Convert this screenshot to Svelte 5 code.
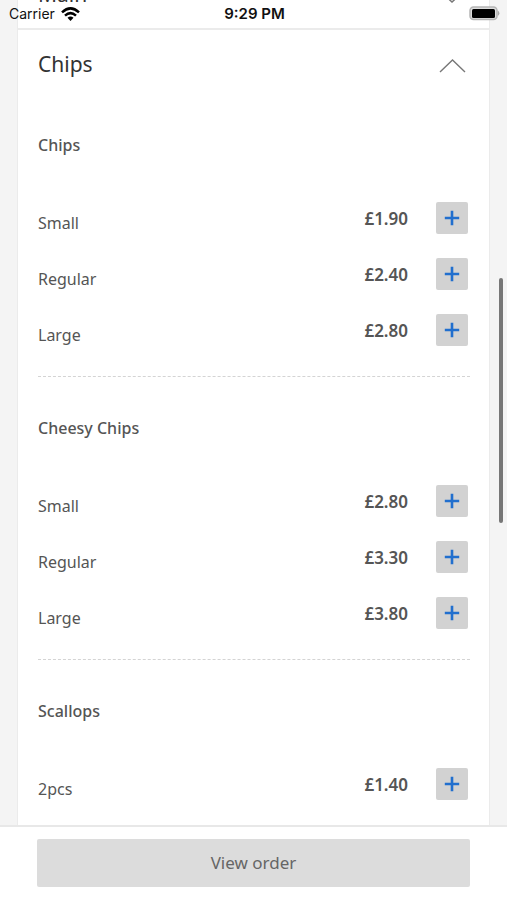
<script>
  const groups = [
    { name: 'Chips', items: [['Small', '£1.90'], ['Regular', '£2.40'], ['Large', '£2.80']] },
    { name: 'Cheesy Chips', items: [['Small', '£2.80'], ['Regular', '£3.30'], ['Large', '£3.80']] },
    { name: 'Scallops', items: [['2pcs', '£1.40']] }
  ];
  let open = $state(true);
</script>

<div class="screen">
  <header class="status">
    <span class="carrier">
      Carrier
      <svg width="19" height="14" viewBox="0 0 19 14" aria-hidden="true">
        <g fill="none" stroke="#000" stroke-width="2.5">
          <path d="M1 5.3Q9.500-2.500 18 5.300" />
          <path d="M4 8.600Q9.500 3.600 15 8.600" />
        </g>
        <path d="M6.500 10.800Q9.500 8.200 12.500 10.800L9.500 14Z" />
      </svg>
    </span>
    <span class="time">9:29 PM</span>
    <svg class="battery" width="31" height="16" viewBox="0 0 31 16" aria-hidden="true">
      <rect x="1" y="1" width="27" height="12.500" rx="3.500" fill="#ddd" stroke="#b5b5b5" stroke-width="1.500" />
      <rect x="3" y="3" width="23" height="9" rx="1.500" />
      <path d="M28.800 4.500Q32 7.200 28.800 10Z" fill="#aaa" />
    </svg>
  </header>

  <main>
    <div class="card">
      <div class="previous">
        <h2>Main</h2>
        <svg width="28" height="14" viewBox="0 0 28 14" aria-hidden="true">
          <path d="M1 1L14 13L27 1" fill="none" stroke="#777" stroke-width="1.500" />
        </svg>
      </div>
      <button class="category" aria-expanded={open} onclick={() => (open = !open)}>
        <span>Chips</span>
        <svg class:closed={!open} width="28" height="18" viewBox="0 0 28 18" aria-hidden="true">
          <path d="M2 17L14.500 5L27 17" fill="none" stroke="#777" stroke-width="1.400" />
        </svg>
      </button>
      {#if open}
        {#each groups as group}
          <section>
            <h3>{group.name}</h3>
            <ul>
              {#each group.items as [size, price]}
                <li>
                  <span class="size">{size}</span>
                  <span class="price">{price}</span>
                  <button class="add" aria-label="Add {size} {group.name}">
                    <svg width="16" height="16" viewBox="0 0 16 16" aria-hidden="true">
                      <path d="M8 .8V15.200M.8 8H15.200" stroke="#216fce" stroke-width="2.600" />
                    </svg>
                  </button>
                </li>
              {/each}
            </ul>
          </section>
        {/each}
      {/if}
    </div>
    <div class="scrollbar"></div>
  </main>

  <footer><button class="order">View order</button></footer>
</div>

<style>
  :global(body) { margin: 0; }
  .screen {
    position: relative;
    display: flex;
    flex-direction: column;
    height: 100vh;
    overflow: hidden;
    background: #f4f4f4;
    color: #555;
    font-family: "Noto Sans", "Open Sans", sans-serif;
  }
  button { font: inherit; color: inherit; border: 0; padding: 0; cursor: pointer; }
  h2, h3, ul { margin: 0; padding: 0; }
  .status {
    position: absolute;
    inset: 0 0 auto;
    z-index: 1;
    display: grid;
    grid-template-columns: 1fr auto 1fr;
    align-items: center;
    height: 28px;
    padding: 0 7px 0 9px;
    box-sizing: border-box;
    color: #111;
    font: 14px/20px Inter, sans-serif;
  }
  .carrier { display: flex; align-items: center; gap: 6px; }
  .time { font-size: 15px; font-weight: 600; }
  .battery { justify-self: end; }
  main { flex: 1; min-height: 0; overflow: hidden; position: relative; }
  .card {
    min-height: 100%;
    margin: 0 17px;
    background: #fff;
    border: solid #ebebeb;
    border-width: 0 1px;
  }
  .previous {
    display: flex;
    align-items: flex-end;
    justify-content: space-between;
    height: 28px;
    padding: 0 23px 0 20px;
    border-bottom: 2px solid #ebebeb;
  }
  .previous h2 { margin-bottom: 20px; color: #333; font-size: 21px; font-weight: 400; line-height: 28px; }
  .previous svg { margin-bottom: 25px; }
  .category {
    display: flex;
    align-items: center;
    justify-content: space-between;
    width: 100%;
    height: 64px;
    padding: 4px 23px 0 20px;
    background: none;
    color: #333;
    font-size: 21px;
    line-height: 28px;
  }
  .closed { transform: rotate(180deg); }
  section { margin: 0 19px 0 20px; padding: 39px 0 30px; border-bottom: 1px dashed #d4d4d4; }
  h3 { height: 69px; font-size: 16px; font-weight: 500; line-height: 24px; }
  ul { display: flex; flex-direction: column; gap: 24px; list-style: none; }
  li { display: flex; align-items: center; height: 32px; padding-right: 2px; font-size: 16px; line-height: 24px; }
  .size { flex: 1; padding-top: 10px; }
  .price { margin-right: 28px; padding-top: 2px; font-weight: 600; font-size: 17px; }
  .add { display: grid; place-items: center; width: 32px; height: 32px; border-radius: 2px; background: #d2d2d2; }
  .scrollbar {
    position: absolute;
    top: 278px;
    right: 4px;
    width: 4px;
    height: 245px;
    border-radius: 2px;
    background: #777;
  }
  footer { padding: 12px 37px 13px; border-top: 2px solid #e8e8e8; background: #fff; }
  .order {
    display: block;
    width: 100%;
    height: 48px;
    border-radius: 2px;
    background: #dcdcdc;
    color: #666;
    font-size: 17px;
    line-height: 24px;
  }
</style>
